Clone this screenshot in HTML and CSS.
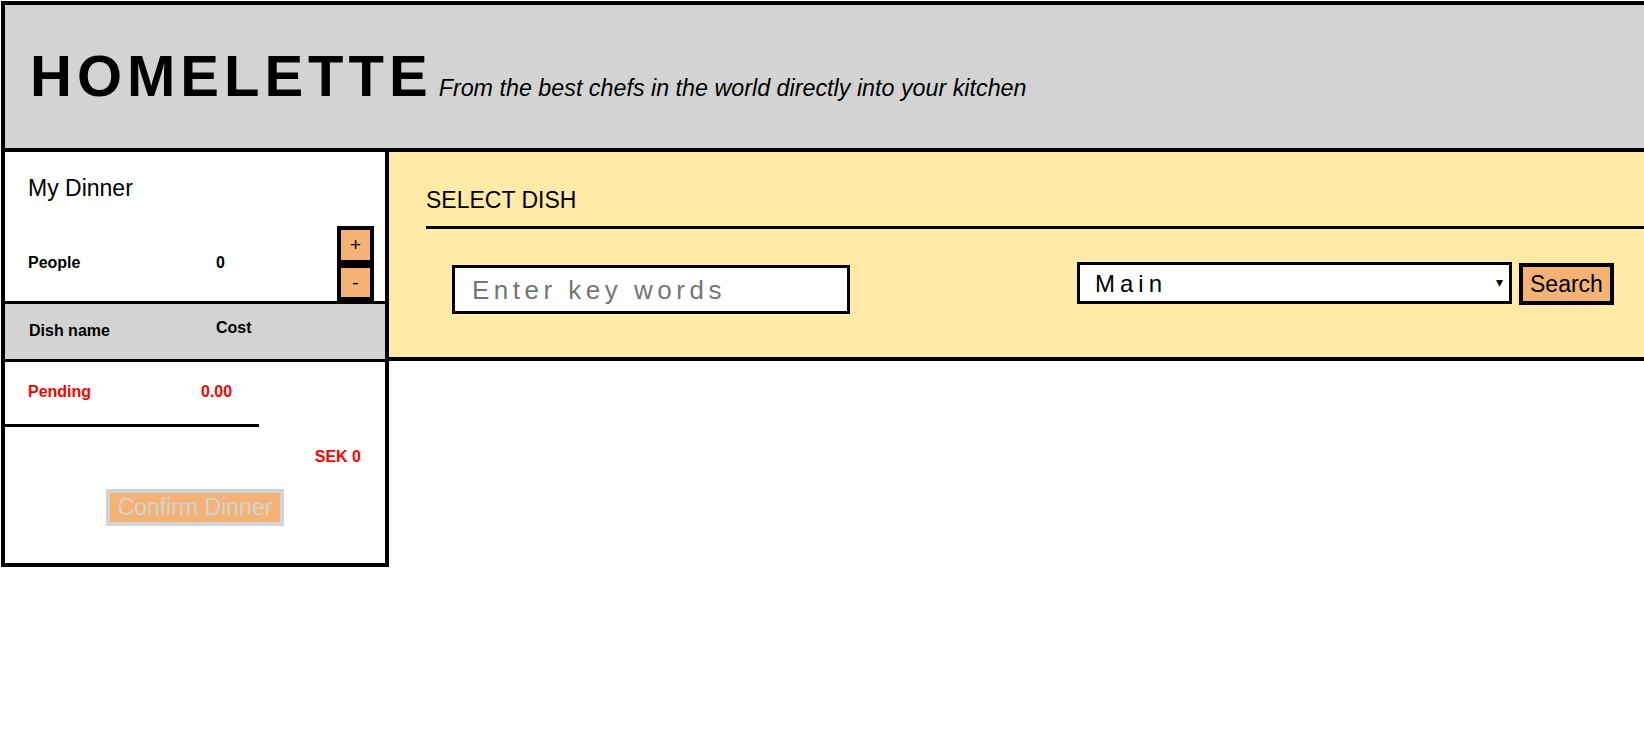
FILE: index.html
```html
<!DOCTYPE html>
<html lang="en">
<head>
<meta charset="utf-8">
<title>Homelette</title>
<link rel="stylesheet" href="styles.css">
</head>
<body>
<div class="page">
  <header class="masthead">
    <h1 class="brand">HOMELETTE</h1>
    <p class="tagline">From the best chefs in the world directly into your kitchen</p>
  </header>
  <div class="content">
    <aside class="sidebar">
      <h2 class="sidebar-title">My Dinner</h2>
      <div class="people-row">
        <span class="people-label">People</span>
        <span class="people-count">0</span>
        <div class="stepper">
          <button class="step-btn">+</button>
          <button class="step-btn">-</button>
        </div>
      </div>
      <div class="dish-head">
        <span class="head-name">Dish name</span>
        <span class="head-cost">Cost</span>
      </div>
      <div class="dish-row">
        <span class="row-name">Pending</span>
        <span class="row-cost">0.00</span>
      </div>
      <div class="divider"></div>
      <div class="total">SEK 0</div>
      <div class="confirm-wrap">
        <button class="confirm-btn" disabled>Confirm Dinner</button>
      </div>
    </aside>
    <main class="dish-panel">
      <h2 class="section-title">SELECT DISH</h2>
      <div class="search-row">
        <input class="keyword-input" type="text" placeholder="Enter key words">
        <div class="select-wrap">
          <select class="type-select">
            <option>Main</option>
            <option>Starter</option>
            <option>Dessert</option>
          </select>
          <span class="select-arrow">&#9662;</span>
        </div>
        <button class="search-btn">Search</button>
      </div>
    </main>
  </div>
</div>
</body>
</html>
```

FILE: styles.css
```css
html, body {
  margin: 0;
  padding: 0;
  background: #ffffff;
  overflow: hidden;
}

body {
  padding: 1px 0 0 1px;
  font-family: "Liberation Sans", Arial, sans-serif;
  color: #000;
}

.page {
  width: 1720px;
}

/* ---------- header ---------- */
.masthead {
  box-sizing: border-box;
  height: 151px;
  border: 4px solid #000;
  background: #d3d3d3;
  display: flex;
  align-items: baseline;
  padding: 42px 0 0 25px;
}

.brand {
  margin: 0;
  font-size: 58px;
  line-height: 58px;
  font-weight: bold;
  letter-spacing: 5px;
}

.tagline {
  margin: 0 0 0 6px;
  font-size: 23.3px;
  font-style: italic;
}

/* ---------- content ---------- */
.content {
  display: flex;
  align-items: flex-start;
}

.sidebar {
  box-sizing: border-box;
  width: 388px;
  height: 415px;
  flex: none;
  border: 4px solid #000;
  border-top: none;
  background: #fff;
}

.sidebar-title {
  margin: 0;
  padding: 23px 0 0 23px;
  font-size: 23px;
  line-height: 26px;
  font-weight: normal;
}

.people-row {
  display: flex;
  align-items: center;
  margin-top: 25px;
  padding-left: 23px;
  font-size: 16px;
  font-weight: bold;
  line-height: 18px;
}

.people-label {
  width: 188px;
  padding-bottom: 2px;
}

.people-count {
  flex: 1;
  padding-bottom: 2px;
}

.stepper {
  display: flex;
  flex-direction: column;
  margin-right: 11px;
}

.step-btn {
  box-sizing: border-box;
  width: 37px;
  height: 37.5px;
  margin: 0;
  padding: 0;
  border: 4px solid #000;
  background: #f4b274;
  color: #000;
  font-family: "Liberation Sans", Arial, sans-serif;
  font-size: 19px;
  line-height: 27px;
}

.dish-head {
  display: flex;
  align-items: flex-start;
  height: 55px;
  border-top: 3px solid #000;
  border-bottom: 3px solid #000;
  background: #d3d3d3;
  padding-left: 24px;
  font-size: 16px;
  font-weight: bold;
  line-height: 18px;
}

.head-name {
  width: 187px;
  padding-top: 18px;
}

.head-cost {
  padding-top: 15px;
}

.dish-row {
  display: flex;
  padding: 21px 0 0 23px;
  font-size: 16px;
  font-weight: bold;
  line-height: 18px;
  color: #ff0000;
}

.row-name {
  width: 173px;
}

.divider {
  width: 254px;
  height: 3px;
  margin-top: 23px;
  background: #000;
}

.total {
  margin-top: 21px;
  padding-right: 24px;
  text-align: right;
  font-size: 16px;
  font-weight: bold;
  line-height: 18px;
  color: #ff0000;
}

.confirm-wrap {
  display: flex;
  justify-content: center;
  margin-top: 23px;
}

.confirm-btn {
  box-sizing: border-box;
  height: 37px;
  margin: 0;
  padding: 0 8px;
  border: 4px solid #d3d3d3;
  background: #f4b274;
  color: #d3d3d3;
  font-family: "Liberation Sans", Arial, sans-serif;
  font-size: 23px;
  line-height: 29px;
}

/* ---------- dish panel ---------- */
.dish-panel {
  box-sizing: border-box;
  flex: 1;
  height: 209px;
  background: #ffeaa7;
  border-bottom: 4px solid #000;
}

.section-title {
  margin: 0 0 0 37px;
  padding: 35px 0 13px 0;
  border-bottom: 3px solid #000;
  font-size: 23px;
  line-height: 26px;
  font-weight: normal;
}

.search-row {
  display: flex;
  align-items: flex-start;
  padding-left: 63px;
}

.keyword-input {
  box-sizing: border-box;
  width: 398px;
  height: 49px;
  margin: 36px 0 0 0;
  padding: 2px 0 0 17px;
  border: 3px solid #000;
  background: #fff;
  font-family: "Liberation Sans", Arial, sans-serif;
  font-size: 26px;
  letter-spacing: 4.5px;
  color: #000;
  outline: none;
}

.keyword-input::placeholder {
  color: #757575;
}

.select-wrap {
  position: relative;
  margin: 33px 0 0 227px;
}

.type-select {
  box-sizing: border-box;
  display: block;
  width: 435px;
  height: 42px;
  margin: 0;
  padding: 0 0 0 15px;
  border: 3px solid #000;
  border-radius: 0;
  background: #fff;
  -webkit-appearance: none;
  appearance: none;
  font-family: "Liberation Sans", Arial, sans-serif;
  font-size: 24px;
  letter-spacing: 5px;
  color: #000;
  outline: none;
}

.select-arrow {
  position: absolute;
  right: 9px;
  top: 12px;
  font-size: 14px;
  line-height: 16px;
  color: #000;
  pointer-events: none;
}

.search-btn {
  box-sizing: border-box;
  height: 42px;
  margin: 34px 0 0 7px;
  padding: 0 7px;
  border: 4px solid #000;
  background: #f4b274;
  color: #000;
  font-family: "Liberation Sans", Arial, sans-serif;
  font-size: 23px;
  line-height: 34px;
}
```
